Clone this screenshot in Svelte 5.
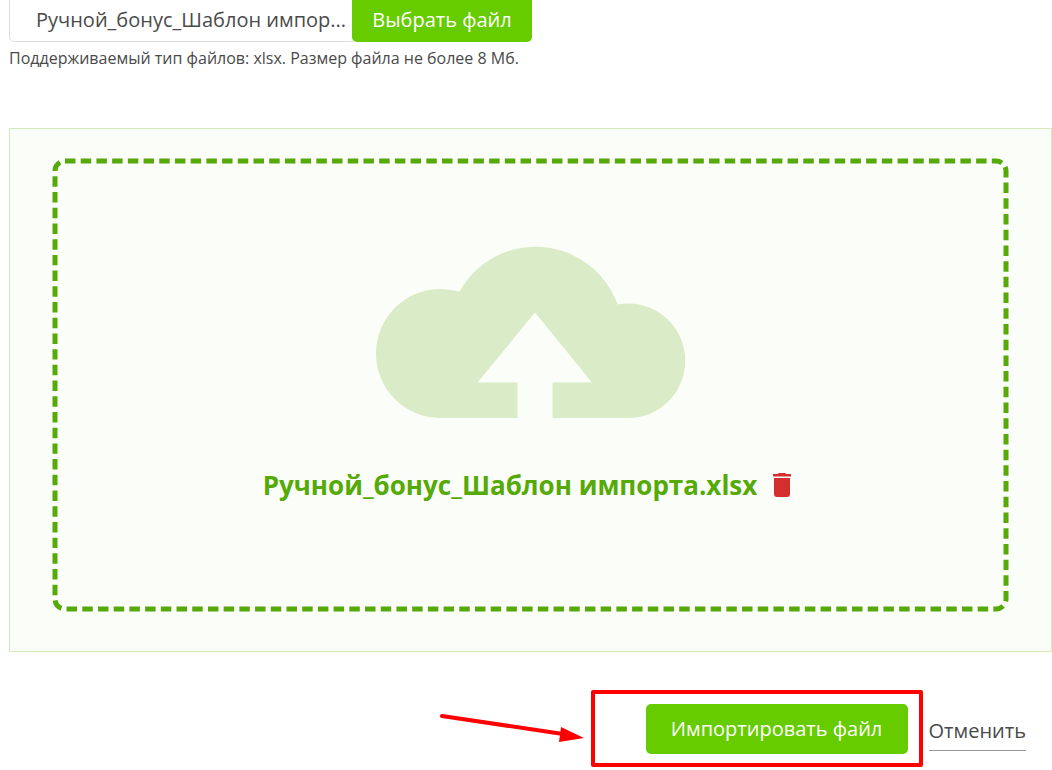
<script>
  let fileName = $state('Ручной_бонус_Шаблон импорта.xlsx');
  let shortName = $derived(fileName.length > 28 ? fileName.slice(0, 25) + '...' : fileName);
</script>

<main class="page">
  <div class="picker">
    <input class="file-name" type="text" readonly value={shortName} aria-label="Файл" aria-describedby="hint" />
    <button class="btn choose" type="button">Выбрать файл</button>
  </div>
  <p class="hint" id="hint">Поддерживаемый тип файлов: xlsx. Размер файла не более 8 Мб.</p>

  <section class="panel">
    <div class="drop">
      <svg class="frame" aria-hidden="true">
        <rect class="dashes" x="3" y="3" rx="10" pathLength="531" />
      </svg>
      <svg class="cloud" viewBox="0 0 309 172" aria-hidden="true">
        <path
          fill="#daecc7"
          d="M64 172A64 64.5 0 0 1 64 43Q74 43 83.500 45.500A87 87 0 0 1 241.500 58.500Q247 57.500 252 57.500A57 57 0 0 1 252 172H176.500V136.500H216L159 66.500L101.500 136.500H141.500V172Z"
        />
      </svg>
      <div class="file">
        <span>{fileName}</span>
        <button class="remove" type="button" aria-label="Удалить файл">
          <svg viewBox="0 0 20 26" aria-hidden="true">
            <path fill="#d32f2f" d="M1 2H5.500L7 1H13L14.500 2H19V4.500H1ZM2 6H18V22Q18 25 15 25H5Q2 25 2 22Z" />
          </svg>
        </button>
      </div>
    </div>
  </section>

  <div class="actions">
    <svg class="arrow" viewBox="0 0 146 32" aria-hidden="true">
      <path d="M3 4L124 22" fill="none" stroke="#f00" stroke-width="4" stroke-linecap="round" />
      <path d="M122 15L145 26L120 30Z" fill="#f00" />
    </svg>
    <div class="marked">
      <button class="btn import" type="button">Импортировать файл</button>
    </div>
    <a class="cancel" href="#cancel">Отменить</a>
  </div>
</main>

<style>
  :global(body) {
    margin: 0;
    background: #fff;
  }
  .page {
    padding-left: 9px;
    font-family: 'Open Sans', 'Noto Sans', sans-serif;
    color: #4a4a4a;
  }
  .picker {
    display: flex;
  }
  .file-name {
    box-sizing: border-box;
    width: 348px;
    height: 42px;
    margin: 0 -5px 0 0;
    padding: 0 0 2px 26px;
    border: 1px solid #ddd;
    border-top: 0;
    border-radius: 0 0 5px 5px;
    background: #fff;
    font: 20px/28px 'Open Sans', 'Noto Sans', sans-serif;
    color: #4a4a4a;
    outline: none;
  }
  .btn {
    border: 0;
    background: #66cc00;
    color: #fff;
    font: 20px/28px 'Open Sans', 'Noto Sans', sans-serif;
    white-space: nowrap;
    cursor: pointer;
  }
  .choose {
    position: relative;
    width: 180px;
    height: 42px;
    padding: 0 0 2px;
    border-radius: 0 0 5px 5px;
  }
  .hint {
    margin: 4px 0 0;
    font-size: 16px;
    line-height: 24px;
  }
  .panel {
    margin-top: 58px;
    padding: 29px 42px 39px;
    border: 1px solid #d3eabb;
    background: #fafdf8;
  }
  .drop {
    position: relative;
    display: flex;
    flex-direction: column;
    align-items: center;
    padding: 88px 0 109px;
  }
  .frame {
    position: absolute;
    inset: 0;
    width: 100%;
    height: 100%;
  }
  .dashes {
    width: calc(100% - 6px);
    height: calc(100% - 6px);
    fill: none;
    stroke: #55aa08;
    stroke-width: 5px;
    stroke-dasharray: 2 1;
  }
  .cloud {
    width: 309px;
    height: 172px;
  }
  .file {
    display: flex;
    align-items: center;
    gap: 15px;
    margin-top: 49px;
    padding-right: 6px;
    font-size: 26px;
    font-weight: 700;
    line-height: 36px;
    color: #55aa08;
    z-index: 1;
  }
  .remove {
    width: 20px;
    height: 26px;
    padding: 0;
    border: 0;
    background: none;
    cursor: pointer;
  }
  .remove svg {
    display: block;
    width: 20px;
    height: 26px;
  }
  .actions {
    display: flex;
    align-items: flex-start;
    justify-content: flex-end;
    margin-top: 38px;
    padding-right: 26px;
  }
  .arrow {
    width: 146px;
    height: 32px;
    margin: 22px 6px 0 0;
  }
  .marked {
    padding: 10px 11px 9px 51px;
    border: 4px solid #f00;
    border-radius: 2px;
  }
  .import {
    display: block;
    width: 262px;
    height: 50px;
    padding: 0;
    border-radius: 5px;
  }
  .cancel {
    margin: 27px 0 0 6px;
    padding-bottom: 5px;
    border-bottom: 1px solid #999;
    color: #4a4a4a;
    font-size: 20px;
    line-height: 28px;
    text-decoration: none;
  }
</style>
